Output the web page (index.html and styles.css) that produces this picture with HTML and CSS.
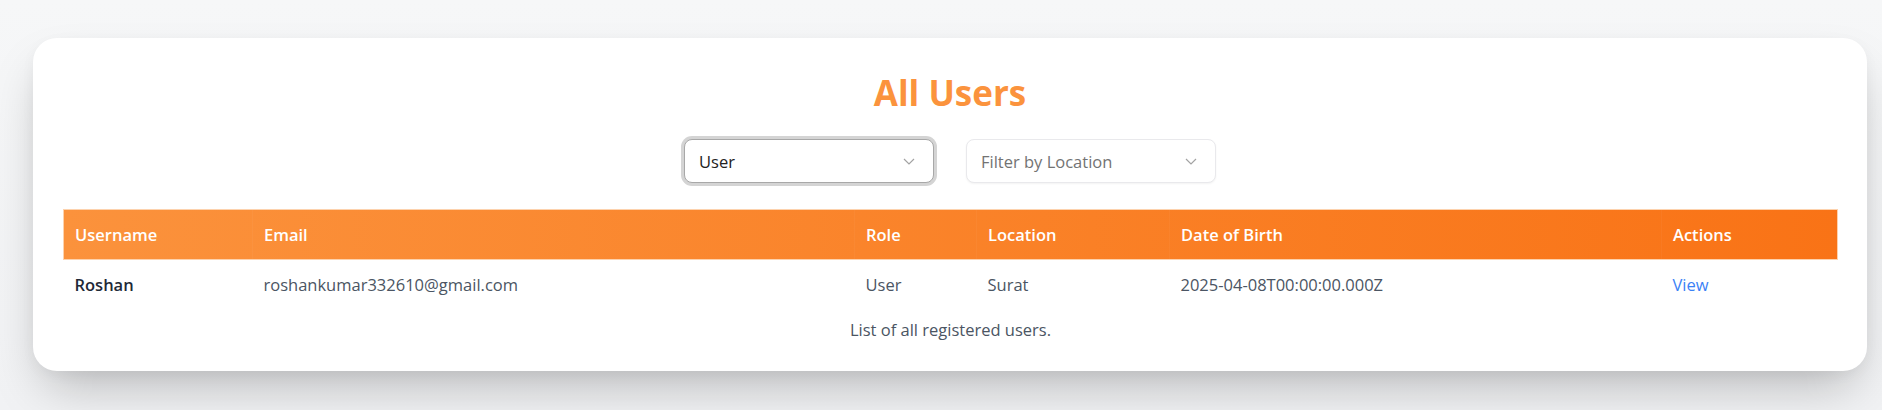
FILE: index.html
```html
<!DOCTYPE html>
<html lang="en">
<head>
<meta charset="utf-8">
<title>All Users</title>
<link rel="stylesheet" href="styles.css">
</head>
<body>
<div class="page">
  <section class="card">
    <h1 class="title">All Users</h1>
    <div class="filters">
      <div class="select-wrap">
        <select class="select select-focused">
          <option>User</option>
          <option>Admin</option>
        </select>
        <svg class="chevron" width="12" height="7" viewBox="0 0 12 7"><path d="M1 1 L6 6 L11 1" fill="none" stroke="#a3a3a3" stroke-width="1.2"/></svg>
      </div>
      <div class="select-wrap">
        <select class="select select-placeholder">
          <option>Filter by Location</option>
          <option>Surat</option>
        </select>
        <svg class="chevron" width="12" height="7" viewBox="0 0 12 7"><path d="M1 1 L6 6 L11 1" fill="none" stroke="#a3a3a3" stroke-width="1.2"/></svg>
      </div>
    </div>
    <table class="users">
      <caption class="caption">List of all registered users.</caption>
      <colgroup>
        <col class="c-user">
        <col class="c-email">
        <col class="c-role">
        <col class="c-loc">
        <col class="c-dob">
        <col class="c-act">
      </colgroup>
      <thead>
        <tr class="head-row">
          <th>Username</th>
          <th>Email</th>
          <th>Role</th>
          <th>Location</th>
          <th>Date of Birth</th>
          <th>Actions</th>
        </tr>
      </thead>
      <tbody>
        <tr class="body-row">
          <td class="name">Roshan</td>
          <td>roshankumar332610@gmail.com</td>
          <td>User</td>
          <td>Surat</td>
          <td>2025-04-08T00:00:00.000Z</td>
          <td><a class="view" href="#">View</a></td>
        </tr>
      </tbody>
    </table>
  </section>
</div>
</body>
</html>
```
FILE: styles.css
```css
* { box-sizing: border-box; }
html, body {
  margin: 0;
  height: 100%;
}
body {
  background: linear-gradient(180deg, #f6f7f8 0%, #f1f2f4 100%);
  font-family: "Open Sans", "Noto Sans", sans-serif;
  font-size: 16.5px;
  color: #4b5563;
  overflow: hidden;
}
.page {
  padding: 38px 15px 0 33px;
}
.card {
  background: #ffffff;
  border-radius: 24px;
  padding: 35px 30px 29px;
  box-shadow: 0 25px 50px -12px rgba(0, 0, 0, 0.25), 0 4px 14px rgba(0, 0, 0, 0.04);
}
.title {
  margin: 0 0 26px;
  text-align: center;
  font-size: 35px;
  line-height: 40px;
  font-weight: 700;
  color: #fb933d;
}
.filters {
  display: flex;
  justify-content: center;
  gap: 32px;
  margin-bottom: 26px;
}
.select-wrap {
  position: relative;
  width: 250px;
  height: 44px;
}
.select {
  appearance: none;
  -webkit-appearance: none;
  width: 100%;
  height: 44px;
  padding: 0 14px;
  border-radius: 8px;
  background: #ffffff;
  font-family: inherit;
  font-size: 16.5px;
  outline: none;
}
.select-focused {
  border: 1px solid #a8a8a8;
  color: #222222;
  box-shadow: 0 0 0 3px #d4d4d4;
}
.select-placeholder {
  border: 1px solid #e9e9ec;
  color: #737373;
  box-shadow: 0 1px 2px rgba(0, 0, 0, 0.05);
}
.chevron {
  position: absolute;
  right: 19px;
  top: 19px;
}
.users {
  width: 100%;
  border-collapse: collapse;
  table-layout: fixed;
  caption-side: bottom;
}
.c-user { width: 189px; }
.c-email { width: 602px; }
.c-role { width: 122px; }
.c-loc { width: 193px; }
.c-dob { width: 492px; }
.c-act { width: 176px; }
.head-row {
  background: linear-gradient(90deg, #fb923c 0%, #f97316 100%);
}
.head-row th {
  height: 50px;
  padding: 0 11px;
  text-align: left;
  font-weight: 600;
  color: #ffffff;
  border-top: 1px solid #fdd2ad;
  border-bottom: 1px solid #fdd2ad;
  border-left: 1px solid rgba(255, 255, 255, 0.035);
}
.head-row th:first-child { border-left: 1px solid #fdd2ad; }
.head-row th:last-child { border-right: 1px solid #fdd2ad; }
.body-row td {
  height: 50px;
  padding: 0 11px;
  vertical-align: middle;
  color: #4b5563;
}
.body-row .name {
  font-weight: 600;
  color: #1f2937;
}
.view {
  color: #3b82f6;
  text-decoration: none;
}
.caption {
  padding-top: 8px;
  line-height: 24px;
  color: #4b5563;
  text-align: center;
}
```
